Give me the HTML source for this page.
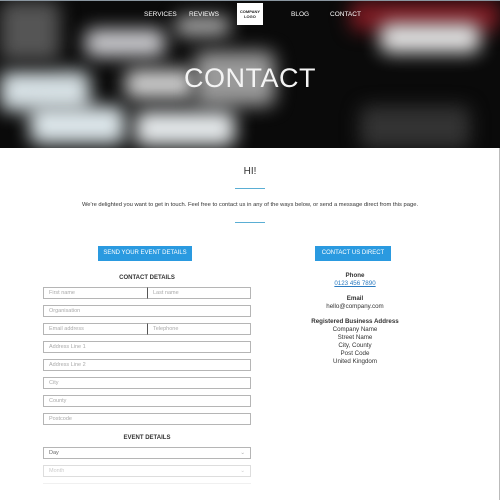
<!DOCTYPE html>
<html><head><style>
*{margin:0;padding:0;box-sizing:border-box}
body{width:500px;height:500px;overflow:hidden;background:#fff;font-family:"Liberation Sans",sans-serif;position:relative}
.hero{position:absolute;left:0;top:0;width:500px;height:148px;background:#0a0a0a;overflow:hidden;border-top:1px solid #8a96a0}
.blob{position:absolute;background:#e8e8ea;filter:blur(9px);border-radius:8px}
.nav{position:absolute;top:10px;color:#fff;font-size:6.5px}
.logo{position:absolute;left:237px;top:2px;width:26px;height:22px;background:#fff;color:#222;font-size:4px;font-weight:bold;text-align:center;padding-top:6px;line-height:5px}
.title{position:absolute;left:0;width:500px;top:62px;text-align:center;color:#f4f4f4;font-size:27px;font-weight:300;letter-spacing:0.5px}
.t{position:absolute;text-align:center;color:#333}
.line{position:absolute;left:235px;width:30px;height:1px;background:#5aaed4}
.btn{position:absolute;height:15px;background:#2a9ae0;color:#fff;font-size:6px;text-align:center;line-height:15px}
.in{position:absolute;left:43px;width:208px;height:12px;border:1px solid #b5b5b5;font-size:5.5px;color:#aaa;padding-left:5px;line-height:10px}
.half{border-left:1px solid #555}
.h{position:absolute;left:43px;width:208px;text-align:center;font-size:6px;font-weight:bold;color:#333}
.r{position:absolute;left:280px;width:150px;text-align:center;font-size:6.2px;color:#333}
</style></head><body>
<div class="hero">
<div class="blob" style="left:85px;top:28px;width:80px;height:28px;background:#c8c8cc"></div>
<div class="blob" style="left:175px;top:15px;width:55px;height:20px;background:#aaa"></div>
<div class="blob" style="left:0;top:70px;width:90px;height:40px;background:#d6e0e4"></div>
<div class="blob" style="left:125px;top:68px;width:70px;height:30px;background:#ccc"></div>
<div class="blob" style="left:195px;top:50px;width:80px;height:55px;background:#9a9a9a"></div>
<div class="blob" style="left:30px;top:105px;width:95px;height:38px;background:#dce6ea"></div>
<div class="blob" style="left:135px;top:110px;width:100px;height:35px;background:#e4e8ea"></div>
<div class="blob" style="left:0;top:0;width:60px;height:60px;background:#555"></div>
<div class="blob" style="left:350px;top:0;width:150px;height:30px;background:#7a1a22"></div>
<div class="blob" style="left:380px;top:22px;width:100px;height:30px;background:#e0e0e0"></div>
<div class="blob" style="left:360px;top:105px;width:110px;height:43px;background:#333"></div>
<div class="nav" style="left:144px">SERVICES</div>
<div class="nav" style="left:189px">REVIEWS</div>
<div class="logo">COMPANY<br>LOGO</div>
<div class="nav" style="left:291px">BLOG</div>
<div class="nav" style="left:330px">CONTACT</div>
<div class="title">CONTACT</div>
</div>
<div style="position:absolute;right:0;top:148px;width:1px;height:352px;background:#bbb"></div>
<div class="t" style="left:0;width:500px;top:166px;font-size:10px">HI!</div>
<div class="line" style="top:188px"></div>
<div class="t" style="left:0;width:500px;top:202px;font-size:5.8px">We're delighted you want to get in touch. Feel free to contact us in any of the ways below, or send a message direct from this page.</div>
<div class="line" style="top:222px"></div>
<div class="btn" style="left:98px;top:246px;width:94px">SEND YOUR EVENT DETAILS</div>
<div class="btn" style="left:315px;top:246px;width:76px">CONTACT US DIRECT</div>
<div class="h" style="top:275px">CONTACT DETAILS</div>
<div class="in" style="top:287px;width:105px">First name</div>
<div class="in half" style="top:287px;left:147px;width:104px">Last name</div>
<div class="in" style="top:305px">Organisation</div>
<div class="in" style="top:323px;width:105px">Email address</div>
<div class="in half" style="top:323px;left:147px;width:104px">Telephone</div>
<div class="in" style="top:341px">Address Line 1</div>
<div class="in" style="top:359px">Address Line 2</div>
<div class="in" style="top:377px">City</div>
<div class="in" style="top:395px">County</div>
<div class="in" style="top:413px">Postcode</div>
<div class="h" style="top:435px">EVENT DETAILS</div>
<div class="in" style="top:447px;color:#666">Day<span style="position:absolute;right:5px;color:#aaa">⌄</span></div>
<div class="in" style="top:465px;border-color:#ddd;color:#ccc">Month<span style="position:absolute;right:5px">⌄</span></div>
<div class="in" style="top:483px;border:none;border-top:1px solid #f0f0f0"></div>
<div class="r" style="top:272px;font-weight:bold">Phone</div>
<div class="r" style="top:280px;color:#2a7ac0;text-decoration:underline">0123 456 7890</div>
<div class="r" style="top:295px;font-weight:bold">Email</div>
<div class="r" style="top:303px">hello@company.com</div>
<div class="r" style="top:318px;font-weight:bold">Registered Business Address</div>
<div class="r" style="top:326px">Company Name</div>
<div class="r" style="top:334px">Street Name</div>
<div class="r" style="top:342px">City, County</div>
<div class="r" style="top:350px">Post Code</div>
<div class="r" style="top:358px">United Kingdom</div>
</body></html>
